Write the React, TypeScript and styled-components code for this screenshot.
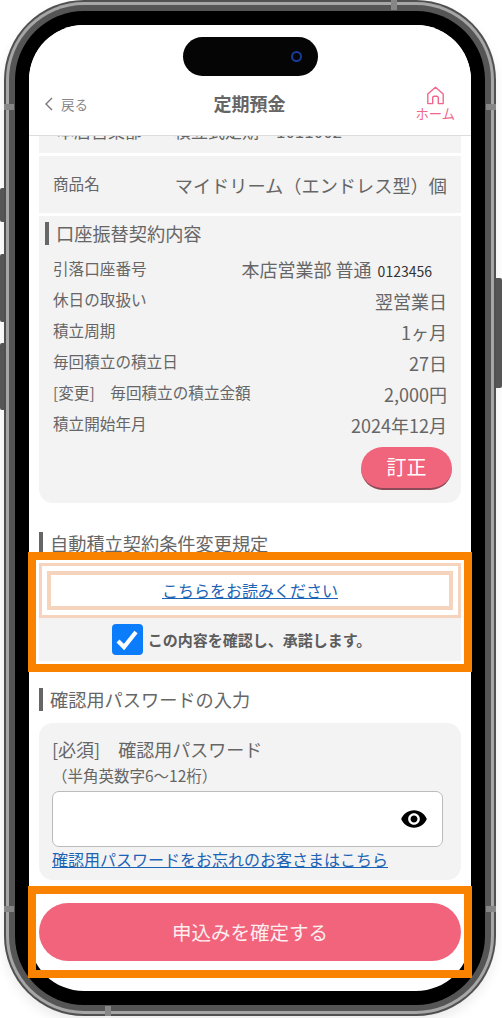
import { MdVisibility } from "react-icons/md";
import styled, { createGlobalStyle } from "styled-components";

const GlobalStyle = createGlobalStyle`
  html, body {
    margin: 0;
    background: #fff;
    font-family: "Noto Sans CJK JP", "Noto Sans", sans-serif;
    color: #666;
  }
  * {
    box-sizing: border-box;
  }
`;

const Page = styled.div`
  width: 502px;
  height: 1018px;
  padding-left: 4px;
  overflow: hidden;
`;

const Phone = styled.div`
  position: relative;
  width: 492px;
  height: 1016px;
  padding: 2px;
  border-radius: 80px;
  background: #505050;
  box-shadow: 0 6px 12px rgba(0, 0, 0, 0.08);
`;

const Ring = styled.div`
  height: 100%;
  padding: 3px;
  border-radius: 78px;
  background: #a6a6a6;
`;

const Band = styled.div`
  height: 100%;
  padding: 6px;
  border-radius: 75px;
  background: #555;
`;

const Bezel = styled.div`
  height: 100%;
  padding: 14px;
  border-radius: 69px;
  background: #000;
`;

const SideKey = styled.div<{ $top: number; $height: number; $right?: boolean }>`
  position: absolute;
  top: ${({ $top }) => $top}px;
  ${({ $right }) => ($right ? "right: -6px;" : "left: -4px;")}
  width: ${({ $right }) => ($right ? 6 : 4)}px;
  height: ${({ $height }) => $height}px;
  background: #555;
  border-radius: ${({ $right }) => ($right ? "0 2px 2px 0" : "2px 0 0 2px")};
`;

const Notch = styled.div<{ $top?: number; $left?: number; $right?: number; $bottom?: number; $upright?: boolean }>`
  position: absolute;
  ${({ $top }) => ($top !== undefined ? `top: ${$top}px;` : "")}
  ${({ $left }) => ($left !== undefined ? `left: ${$left}px;` : "")}
  ${({ $right }) => ($right !== undefined ? `right: ${$right}px;` : "")}
  ${({ $bottom }) => ($bottom !== undefined ? `bottom: ${$bottom}px;` : "")}
  width: ${({ $upright }) => ($upright ? 6 : 10)}px;
  height: ${({ $upright }) => ($upright ? 10 : 6)}px;
  background: #868686;
`;

const Screen = styled.div`
  position: relative;
  display: flex;
  flex-direction: column;
  height: 100%;
  border-radius: 55px;
  background: #fff;
  overflow: hidden;
`;

const Island = styled.div`
  position: absolute;
  z-index: 2;
  top: 12px;
  left: 154px;
  width: 135px;
  height: 39px;
  border-radius: 20px;
  background: #050505;
`;

const Camera = styled.div`
  position: absolute;
  top: 14px;
  right: 16px;
  width: 11px;
  height: 11px;
  border: 2px solid #173c98;
  border-radius: 50%;
`;

const Header = styled.header`
  position: relative;
  z-index: 1;
  flex: none;
  display: grid;
  grid-template-columns: 1fr auto 1fr;
  align-items: center;
  height: 111px;
  padding: 61px 16px 12px 15px;
  border-bottom: 1px solid #ddd;
  background: #fff;
`;

const Back = styled.div`
  display: flex;
  align-items: center;
  gap: 7px;
  padding-bottom: 2px;
  font-size: 13.5px;
  color: #888;
`;

const Title = styled.h1`
  margin: 0;
  padding-bottom: 4px;
  font-size: 18px;
  font-weight: 700;
  line-height: 24px;
  color: #666;
`;

const Home = styled.div`
  justify-self: end;
  display: flex;
  flex-direction: column;
  align-items: center;
  font-size: 13.3px;
  line-height: 18px;
  color: #f2668b;
`;

const Body = styled.main`
  flex: none;
  display: flex;
  flex-direction: column;
  padding: 0 10px;
`;

const CutCard = styled.div`
  display: flex;
  align-items: center;
  gap: 32px;
  height: 44px;
  margin-top: -27px;
  padding: 0 0 2px 18px;
  font-size: 17px;
  background: #f3f3f3;
`;

const NameCard = styled.div`
  display: flex;
  align-items: center;
  justify-content: space-between;
  height: 57px;
  margin-top: 3px;
  padding: 0 14px;
  background: #f3f3f3;
`;

const Card = styled.section`
  margin-top: 3px;
  padding: 6px 9px 13px 6px;
  border-radius: 0 0 14px 14px;
  background: #f3f3f3;
`;

const Heading = styled.h2<{ $top?: number }>`
  display: flex;
  align-items: center;
  height: 23px;
  margin: ${({ $top }) => $top ?? 0}px 0 0;
  padding-left: 7px;
  border-left: 4px solid #666;
  font-size: 18.2px;
  font-weight: 400;
  line-height: 23px;
  color: #666;
`;

const Rows = styled.dl`
  margin: 10px 0 6px;
  padding-left: 8px;
`;

const Row = styled.div`
  display: flex;
  align-items: center;
  justify-content: space-between;
  height: 31px;
  padding-right: 5px;
`;

const Label = styled.dt`
  padding-bottom: 5px;
  font-size: 15.6px;
  line-height: 22px;
`;

const Value = styled.dd`
  margin: 0;
  padding-bottom: 2px;
  font-size: 18px;
  line-height: 24px;
`;

const NameLabel = styled.span`
  padding-bottom: 3px;
  font-size: 15.6px;
`;

const NameValue = styled.span`
  font-size: 18.2px;
  white-space: nowrap;
`;

const AccountNo = styled.span`
  margin: 0 15px 0 6px;
  font-size: 14px;
  color: #333;
`;

const EditRow = styled.div`
  display: flex;
  justify-content: flex-end;
`;

const EditButton = styled.button`
  width: 91px;
  height: 43px;
  padding: 0 0 3px;
  border: 0;
  border-bottom: 2px solid #8c4a58;
  border-radius: 22px;
  background: #f0647c;
  font: inherit;
  font-size: 20px;
  color: #fff;
`;

const ReadBox = styled.div`
  height: 55px;
  margin-top: 8px;
  padding: 5px;
  border: 3px solid #f5d3bd;
  background: #fff;
`;

const ReadInner = styled.div`
  display: flex;
  align-items: center;
  justify-content: center;
  height: 100%;
  padding-bottom: 2px;
  border: 4px solid #f5d3bd;
`;

const TextLink = styled.a`
  font-size: 16px;
  line-height: 24px;
  color: #1b63b5;
  text-decoration: underline;
  white-space: nowrap;
`;

const ConsentRow = styled.label`
  display: flex;
  align-items: center;
  justify-content: center;
  gap: 5px;
  height: 43px;
  padding: 0 17px 0 0;
  background: #f3f3f3;
  font-size: 15px;
  font-weight: 700;
  color: #5c5c5c;
`;

const CheckBox = styled.span`
  display: flex;
  align-items: center;
  justify-content: center;
  width: 31px;
  height: 31px;
  border-radius: 4px;
  background: #0b7dfb;
`;

const PasswordCard = styled.section`
  margin-top: 12px;
  padding: 14px 18px 9px 13px;
  border-radius: 14px;
  background: #f3f3f3;
`;

const FieldLabel = styled.div`
  font-size: 18px;
  line-height: 24px;
  white-space: pre;
`;

const FieldHint = styled.div`
  margin-top: 2px;
  font-size: 15.5px;
  line-height: 24px;
`;

const InputBox = styled.div`
  display: flex;
  align-items: center;
  justify-content: flex-end;
  height: 56px;
  margin-top: 4px;
  padding-right: 14px;
  border: 1px solid #bbb;
  border-radius: 7px;
  background: #fff;
  color: #000;
`;

const LinkLine = styled.div`
  height: 24px;
`;

const Footer = styled.footer`
  padding: 23px 10px 0;
`;

const SubmitButton = styled.button`
  display: block;
  width: 100%;
  height: 58px;
  padding: 0 0 2px;
  border: 0;
  border-radius: 29px;
  background: #f1647c;
  font: inherit;
  font-size: 19.5px;
  color: #fdeef0;
`;

const Highlight = styled.div<{ $top: number; $height: number }>`
  position: absolute;
  z-index: 3;
  top: ${({ $top }) => $top}px;
  left: 24px;
  width: 444px;
  height: ${({ $height }) => $height}px;
  border: 8px solid #f98200;
`;

const rows = [
  ["休日の取扱い", "翌営業日"],
  ["積立周期", "1ヶ月"],
  ["毎回積立の積立日", "27日"],
  ["[変更]　毎回積立の積立金額", "2,000円"],
  ["積立開始年月", "2024年12月"],
];

const App = () => {
  return (
    <Page>
      <GlobalStyle />
      <Phone>
        <SideKey $top={188} $height={34} />
        <SideKey $top={254} $height={68} />
        <SideKey $top={343} $height={67} />
        <SideKey $top={278} $height={110} $right />
        <Notch $top={104} $left={0} />
        <Notch $top={104} $right={0} />
        <Notch $top={906} $left={0} />
        <Notch $top={906} $right={0} />
        <Notch $top={0} $left={387} $upright />
        <Notch $bottom={0} $left={101} $upright />
        <Ring>
          <Band>
            <Bezel>
              <Screen>
                <Island>
                  <Camera />
                </Island>
                <Header>
                  <Back>
                    <svg width="10" height="14" viewBox="0 0 10 14" fill="none" stroke="#777" strokeWidth="1.4">
                      <path d="M8 1 2 7l6 6" />
                    </svg>
                    <span>戻る</span>
                  </Back>
                  <Title>定期預金</Title>
                  <Home>
                    <svg width="19" height="19" viewBox="0 0 19 19" fill="none" stroke="#f2668b" strokeWidth="1.4" strokeLinejoin="round">
                      <path d="M1.8 8 9.5 1.2 17.2 8v9.6h-4.9v-5.8a1.6 1.6 0 0 0-1.6-1.6H8.3a1.6 1.6 0 0 0-1.6 1.6v5.8H1.8z" />
                    </svg>
                    <span>ホーム</span>
                  </Home>
                </Header>
                <Body>
                  <CutCard>
                    <span>本店営業部</span>
                    <span>積立式定期　1011002</span>
                  </CutCard>
                  <NameCard>
                    <NameLabel>商品名</NameLabel>
                    <NameValue>マイドリーム（エンドレス型）個</NameValue>
                  </NameCard>
                  <Card>
                    <Heading>口座振替契約内容</Heading>
                    <Rows>
                      <Row>
                        <Label>引落口座番号</Label>
                        <Value>
                          本店営業部 普通<AccountNo>0123456</AccountNo>
                        </Value>
                      </Row>
                      {rows.map(([label, value]) => (
                        <Row key={label}>
                          <Label>{label}</Label>
                          <Value>{value}</Value>
                        </Row>
                      ))}
                    </Rows>
                    <EditRow>
                      <EditButton>訂正</EditButton>
                    </EditRow>
                  </Card>
                  <Heading $top={29}>自動積立契約条件変更規定</Heading>
                  <ReadBox>
                    <ReadInner>
                      <TextLink href="#">こちらをお読みください</TextLink>
                    </ReadInner>
                  </ReadBox>
                  <ConsentRow>
                    <CheckBox>
                      <svg width="24" height="22" viewBox="0 0 24 22" fill="none" stroke="#fff" strokeWidth="4.2">
                        <path d="M3 12l6 6L21 3" />
                      </svg>
                    </CheckBox>
                    <span>この内容を確認し、承諾します。</span>
                  </ConsentRow>
                  <Heading $top={27}>確認用パスワードの入力</Heading>
                  <PasswordCard>
                    <FieldLabel>[必須]　確認用パスワード</FieldLabel>
                    <FieldHint>（半角英数字6〜12桁）</FieldHint>
                    <InputBox>
                      <MdVisibility size={28} />
                    </InputBox>
                    <LinkLine>
                      <TextLink href="#">確認用パスワードをお忘れのお客さまはこちら</TextLink>
                    </LinkLine>
                  </PasswordCard>
                </Body>
                <Footer>
                  <SubmitButton>申込みを確定する</SubmitButton>
                </Footer>
              </Screen>
            </Bezel>
          </Band>
        </Ring>
        <Highlight $top={552} $height={120} />
        <Highlight $top={886} $height={92} />
      </Phone>
    </Page>
  );
};

export default App;
